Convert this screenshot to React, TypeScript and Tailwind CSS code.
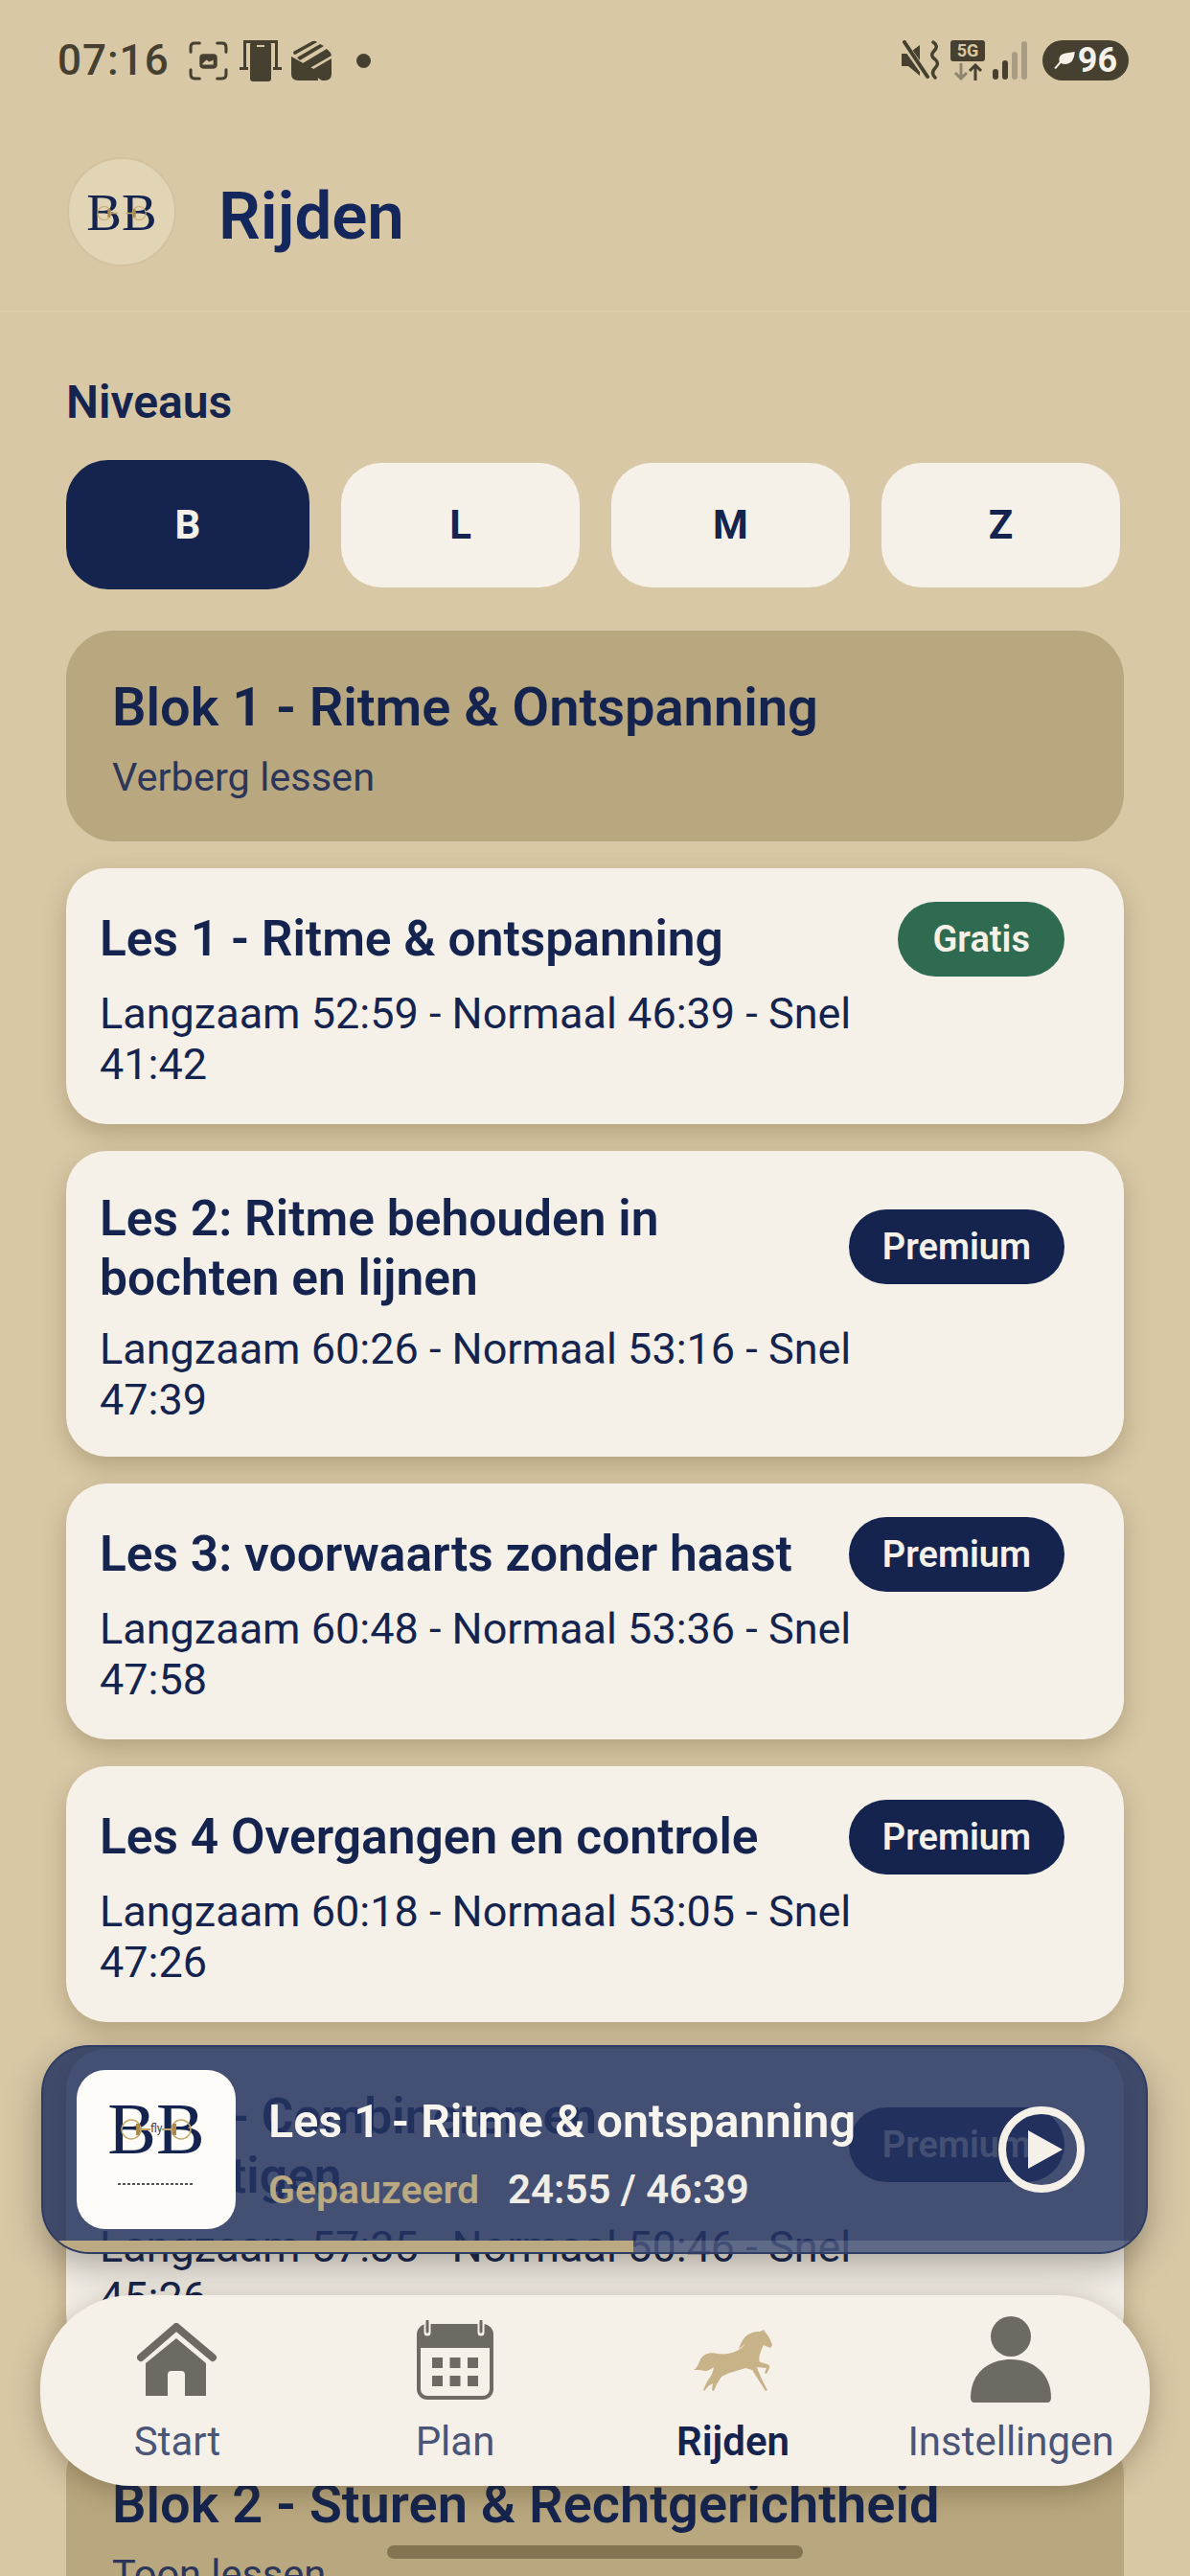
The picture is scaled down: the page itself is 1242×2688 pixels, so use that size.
const levels = ['L', 'M', 'Z'];

const lessons = [
  { title: 'Les 1 - Ritme & ontspanning', times: 'Langzaam 52:59 - Normaal 46:39 - Snel 41:42', badge: 'Gratis' },
  { title: 'Les 2: Ritme behouden in bochten en lijnen', times: 'Langzaam 60:26 - Normaal 53:16 - Snel 47:39', badge: 'Premium' },
  { title: 'Les 3: voorwaarts zonder haast', times: 'Langzaam 60:48 - Normaal 53:36 - Snel 47:58', badge: 'Premium' },
  { title: 'Les 4 Overgangen en controle', times: 'Langzaam 60:18 - Normaal 53:05 - Snel 47:26', badge: 'Premium' },
  { title: 'Les 5 - Combineren en bevestigen', times: 'Langzaam 57:35 - Normaal 50:46 - Snel 45:26', badge: 'Premium' },
];

function Bit({ className }: { className: string }) {
  return (
    <svg viewBox="0 0 80 24" className={className} fill="none" stroke="#c4a868">
      <circle cx="14" cy="12" r="10" strokeWidth="1.5" />
      <circle cx="66" cy="12" r="10" strokeWidth="1.5" />
      <path d="M22 12H34M46 12H58" strokeWidth="2" />
      <path d="M21 6v12M59 6v12" strokeWidth="4" stroke="#a98a4c" />
    </svg>
  );
}

function StatusBar() {
  return (
    <div className="h-[124px] pt-[2px] flex items-center justify-between pl-[60px] pr-[64px] text-[#45402f]">
      <div className="flex items-center">
        <span className="text-[44px] font-medium tracking-[1px] leading-none">07:16</span>
        <svg viewBox="0 0 40 40" className="w-[41px] h-[41px] ml-[20px]" fill="none" stroke="currentColor" strokeWidth="3">
          <path d="M2 11V6q0-4 4-4h5M29 2h5q4 0 4 4v5M38 29v5q0 4-4 4h-5M11 38H6q-4 0-4-4v-5" strokeLinecap="round" />
          <rect x="11" y="13" width="18" height="15" rx="4" fill="currentColor" stroke="none" />
          <path d="M14 23l4-4 3 2 4-2v5H14z" fill="#d8c8a6" stroke="none" />
        </svg>
        <svg viewBox="0 0 44 44" className="w-[44px] h-[44px] ml-[12px]" fill="currentColor">
          <path d="M4 1h36v30h-3V4H7v27H4zM0 29h9v3H0zM35 29h9v3h-9z" />
          <rect x="11" y="3" width="22" height="41" rx="3" />
          <rect x="18" y="6" width="8" height="2" fill="#d8c8a6" />
        </svg>
        <svg viewBox="0 0 42 42" className="w-[42px] h-[42px] ml-[10px]" fill="currentColor">
          <path d="M2 12L22 1q3-1 5 1L4 15q-2 0-2-3z" />
          <path d="M6 18L30 4l4 2L9 21z" />
          <path d="M12 24L37 9l2 2q3 2 3 5L16 31z" />
          <path d="M18 33L42 19v16q0 7-7 7h-3z" />
          <path d="M0 17l27 15 1 10H7q-7 0-7-7z" />
        </svg>
        <span className="w-[15px] h-[15px] rounded-full bg-[#45402f] ml-[26px]" />
      </div>
      <div className="flex items-center">
        <svg viewBox="0 0 40 42" className="w-[40px] h-[42px]" fill="currentColor">
          <path d="M0 14h7L19 5v32L7 27H0z" />
          <path d="M2 3l24 34" stroke="#d8c8a6" strokeWidth="7" />
          <path d="M3 2l24 36" stroke="currentColor" strokeWidth="4" strokeLinecap="round" />
          <path d="M33 2q6 4 1 9t1 9q5 4 0 9t0 10" fill="none" stroke="currentColor" strokeWidth="3.5" strokeLinecap="round" />
        </svg>
        <div className="ml-[11px] w-[36px] flex flex-col items-center">
          <span className="w-[36px] h-[22px] rounded-[3px] bg-[#45402f] text-[#d8c8a6] text-[18px] leading-[22px] text-center font-bold">5G</span>
          <svg viewBox="0 0 36 18" className="w-[36px] h-[18px] mt-[2px]" fill="none" strokeWidth="3">
            <path d="M11 0v15M5 10l6 6 6-6" stroke="#8f8670" />
            <path d="M26 18V3M20 8l6-6 6 6" stroke="#45402f" />
          </svg>
        </div>
        <svg viewBox="0 0 36 40" className="w-[36px] h-[40px] ml-[8px]">
          <rect x="0" y="29" width="6" height="11" rx="3" fill="#45402f" />
          <rect x="10" y="20" width="6" height="20" rx="3" fill="#45402f" />
          <rect x="20" y="11" width="6" height="29" rx="3" fill="#a89d84" />
          <rect x="30" y="0" width="6" height="40" rx="3" fill="#a89d84" />
        </svg>
        <div className="ml-[16px] w-[90px] h-[42px] rounded-full bg-[#45402f] flex items-center justify-center gap-[3px] text-[#f5f1e9]">
          <svg viewBox="0 0 24 20" className="w-[22px] h-[18px]" fill="currentColor">
            <path d="M24 0q-1 12-8 14-5 1-8-1L2 20l-2-1 6-7Q4 4 12 2z" />
          </svg>
          <span className="text-[36px] font-bold leading-none">96</span>
        </div>
      </div>
    </div>
  );
}

function LessonCard({ title, times, badge }: { title: string; times: string; badge: string }) {
  return (
    <div className="bg-[#f5f1e9] rounded-[42px] mt-[28px] min-h-[267px] pl-[35px] pr-[62px] pt-[40px] pb-[33px] flex items-center shadow-[0_10px_24px_rgba(90,70,30,0.28)]">
      <div className="flex-1 min-w-0 -mr-[8px]">
        <div className="max-w-[770px] min-h-[66px] text-[51.5px] leading-[62px] font-semibold text-[#14244f]">{title}</div>
        <div className="text-[45px] leading-[53px] mt-[16px] text-[#14244f] font-normal">{times}</div>
      </div>
      <div className="self-center -translate-y-[63px] shrink-0">
        <span
          className={
            badge === 'Gratis'
              ? 'flex items-center justify-center h-[78px] px-[36px] rounded-full bg-[#2f6b50] text-[#f5f1e9] text-[38px] font-semibold'
              : 'flex items-center justify-center h-[78px] px-[35px] rounded-full bg-[#14244f] text-[#f5f1e9] text-[38px] font-semibold'
          }
        >
          {badge}
        </span>
      </div>
    </div>
  );
}

function Block({ title, sub }: { title: string; sub: string }) {
  return (
    <div className="bg-[#b9a77f] rounded-[50px] h-[220px] px-[48px] pt-[47px] shrink-0">
      <div className="text-[56px] leading-[66px] font-semibold text-[#14244f]">{title}</div>
      <div className="text-[41.5px] leading-[50px] mt-[15px] text-[#2b3658]">{sub}</div>
    </div>
  );
}

function HomeIcon() {
  return (
    <svg viewBox="0 0 84 76" className="w-[84px] h-[76px]" fill="#6d6a63">
      <path d="M4 36L41 4 79 36" fill="none" stroke="#6d6a63" strokeWidth="8" strokeLinecap="round" strokeLinejoin="round" />
      <path d="M41 16L72 42V76H50V54Q50 50 46 50H36Q32 50 32 54V76H9V42z" />
    </svg>
  );
}

function CalendarIcon() {
  return (
    <svg viewBox="0 0 80 83" className="w-[80px] h-[83px]">
      <rect x="2" y="6" width="76" height="75" rx="9" fill="#f5f1e9" stroke="#6d6a63" strokeWidth="4" />
      <path d="M2 15q0-9 9-9h58q9 0 9 9v14H2z" fill="#6d6a63" />
      <path d="M11 1v12M67 1v12" stroke="#f5f1e9" strokeWidth="7" strokeLinecap="round" />
      <path d="M11 1v11M67 1v11" stroke="#6d6a63" strokeWidth="3" strokeLinecap="round" />
      <g fill="#6d6a63">
        <rect x="16" y="39" width="11" height="11" />
        <rect x="34.5" y="39" width="11" height="11" />
        <rect x="53" y="39" width="11" height="11" />
        <rect x="16" y="58" width="11" height="11" />
        <rect x="34.5" y="58" width="11" height="11" />
        <rect x="53" y="58" width="11" height="11" />
      </g>
    </svg>
  );
}

function HorseIcon() {
  return (
    <svg viewBox="0 0 82 65" className="w-[82px] h-[65px]" fill="#c8b288">
      <path d="M73 1L75 4C78 7 80 11 82 17L80 20C77 19 75 18 73 17C71 20 70 24 69 27C68 31 68 34 70 35L77 37Q80 38 79 41L76 47L74 46L76 41L66 40C68 46 72 55 77 64L75 65L68 54L61 43L54 41C48 43 40 45 35 47L29 50L24 58L21 65L19 64L20 57L15 60L11 65L10 64L14 55C18 50 20 46 21 40C18 42 15 44 12 44L6 43L0 43C4 41 5 36 7 32C10 27 16 24 25 26C32 27 38 26 43 24C48 22 52 19 54 15L50 19L47 21C49 15 53 7 59 5C63 3 66 3 69 3Z" />
    </svg>
  );
}

function PersonIcon() {
  return (
    <svg viewBox="0 0 84 90" className="w-[84px] h-[90px]" fill="#6d6a63">
      <circle cx="42" cy="21" r="21" />
      <path d="M0 85C0 60 18 45 42 45s42 15 42 40q0 5-4 5H4q-4 0-4-5z" />
    </svg>
  );
}

function NavItem({ icon, label, active }: { icon: React.ReactNode; label: string; active?: boolean }) {
  return (
    <div className="w-[290px] flex flex-col items-center">
      <div className="h-[90px] flex items-center justify-center">{icon}</div>
      <span className={active ? 'mt-[17px] text-[42px] leading-[48px] font-semibold text-[#14244f]' : 'mt-[17px] text-[42px] leading-[48px] text-[#4a5578] whitespace-nowrap'}>
        {label}
      </span>
    </div>
  );
}

export default function App() {
  return (
    <div className="relative w-[1242px] h-[2688px] overflow-hidden bg-[#d8c8a6] font-['Roboto',sans-serif]">
      <StatusBar />

      {/* header */}
      <div className="h-[202px] flex items-center pl-[70px] pb-[6px] border-b-2 border-[#dccdad]">
        <div className="w-[114px] h-[114px] rounded-full bg-[#e2d5b6] border-2 border-[#d2c29f] flex flex-col items-center justify-center relative">
          <span className="font-['Liberation_Serif',serif] text-[55px] leading-none text-[#14244f]">BB</span>
          <Bit className="absolute w-[56px] h-[17px] top-[48px] left-[27px]" />
        </div>
        <h1 className="ml-[44px] mt-[8px] text-[69px] leading-none font-semibold text-[#14275c]">Rijden</h1>
      </div>

      <div className="px-[69px] flex flex-col">
        <div className="mt-[66px] text-[48px] leading-[56px] font-semibold text-[#14244f]">Niveaus</div>

        <div className="mt-[32px] flex items-center gap-[33px]">
          <div className="w-[254px] h-[135px] rounded-[44px] bg-[#14244f] flex items-center justify-center text-[#f5f1e9] text-[42px] font-bold">B</div>
          {levels.map((l) => (
            <div key={l} className="w-[249px] h-[130px] rounded-[42px] bg-[#f5f1e9] flex items-center justify-center text-[#14244f] text-[42px] font-bold">
              {l}
            </div>
          ))}
        </div>

        <div className="mt-[43px]">
          <Block title="Blok 1 - Ritme & Ontspanning" sub="Verberg lessen" />
        </div>

        {lessons.map((lesson) => (
          <LessonCard key={lesson.title} title={lesson.title} times={lesson.times} badge={lesson.badge} />
        ))}

        <div className="mt-[76px]">
          <Block title="Blok 2 - Sturen & Rechtgerichtheid" sub="Toon lessen" />
        </div>
      </div>

      {/* mini player */}
      <div className="absolute z-10 left-[43px] top-[2134px] w-[1155px] h-[218px] rounded-[50px] overflow-hidden bg-[#24335f]/85 border-2 border-[#2f3c63] shadow-[0_14px_36px_rgba(40,35,25,0.35)] flex items-center pl-[35px] pr-[64px]">
        <div className="w-[166px] h-[166px] rounded-[30px] bg-[#fdfcf8] shrink-0 flex flex-col items-center relative">
          <span className="mt-[28px] font-['Liberation_Serif',serif] text-[76px] leading-[66px] text-[#14244f]">BB</span>
          <Bit className="absolute w-[80px] h-[24px] top-[50px] left-[43px]" />
          <span className="absolute top-[54px] left-[77px] text-[12px] leading-[14px] text-[#444]">fly</span>
          <svg viewBox="0 0 80 2" className="w-[80px] h-[2px] mt-[24px]">
            <path d="M0 1H80" stroke="#555" strokeWidth="2" strokeDasharray="3 2" />
          </svg>
        </div>
        <div className="ml-[34px] pt-[8px] flex-1 min-w-0">
          <div className="text-[48.5px] leading-[56px] font-semibold text-[#f8f5ee] whitespace-nowrap">Les 1 - Ritme &amp; ontspanning</div>
          <div className="mt-[20px] flex items-center leading-[46px] font-semibold">
            <span className="text-[41px] text-[#bba981]">Gepauzeerd</span>
            <span className="ml-[30px] text-[42px] text-[#f0ede6]">24:55 / 46:39</span>
          </div>
        </div>
        <div className="w-[90px] h-[90px] rounded-full border-[8px] border-[#f5f1e9] shrink-0 flex items-center justify-center">
          <svg viewBox="0 0 36 40" className="w-[36px] h-[40px] ml-[8px]" fill="#f5f1e9">
            <path d="M0 0l36 20L0 40z" />
          </svg>
        </div>
        <div className="absolute left-0 right-0 bottom-0 h-[12px] bg-white/15" />
        <div className="absolute left-[14px] bottom-0 w-[602px] h-[12px] bg-[#bba981]" />
      </div>

      {/* bottom nav */}
      <div className="absolute z-10 left-[42px] top-[2395px] w-[1158px] h-[199px] rounded-[96px] bg-[#f5f1e9] shadow-[0_6px_30px_rgba(60,45,20,0.35)] flex justify-center pt-[22px]">
        <div className="flex -ml-[2px]">
          <NavItem icon={<HomeIcon />} label="Start" />
          <NavItem icon={<CalendarIcon />} label="Plan" />
          <NavItem icon={<HorseIcon />} label="Rijden" active />
          <NavItem icon={<PersonIcon />} label="Instellingen" />
        </div>
      </div>

      <div className="absolute z-10 left-[404px] top-[2656px] w-[434px] h-[14px] rounded-full bg-[#857452]" />
    </div>
  );
}
